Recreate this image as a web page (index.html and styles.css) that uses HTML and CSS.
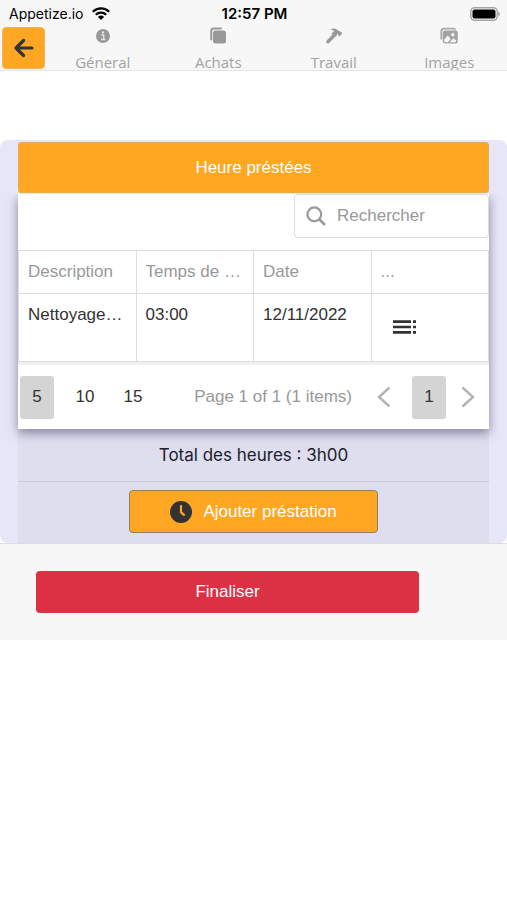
FILE: index.html
```html
<!DOCTYPE html>
<html lang="fr">
<head>
<meta charset="utf-8">
<meta name="viewport" content="width=device-width, initial-scale=1">
<title>Travail</title>
<link rel="stylesheet" href="styles.css">
</head>
<body>
<header class="top">
  <div class="status">
    <div class="status-left">
      <span>Appetize.io</span>
      <svg class="wifi" viewBox="0 0 18 13" aria-hidden="true"><g fill="none" stroke="#000" stroke-width="2.3"><path d="M.9 4.8a11.5 11.5 0 0 1 16.2 0"/><path d="M3.8 7.8a7.4 7.4 0 0 1 10.4 0"/></g><path d="M9 13 5.9 9.9a4.4 4.4 0 0 1 6.2 0z"/></svg>
    </div>
    <span class="clock">12:57 PM</span>
    <div class="status-right">
      <svg class="battery" viewBox="0 0 30 14" aria-hidden="true"><rect x=".8" y=".8" width="26.4" height="12.4" rx="3.6" fill="#f7f7f7" stroke="#a5a5a5" stroke-width="1.4"/><rect x="2.5" y="2.5" width="23" height="9" rx="2"/><path d="M28.2 4.8q1.8 1 1.8 2.2t-1.8 2.2z" fill="#a5a5a5"/></svg>
    </div>
  </div>
  <nav class="tabs">
    <button class="back" type="button" aria-label="Retour"><svg viewBox="0 0 20 20" aria-hidden="true"><path d="M18 10H2.500M9.500 2.500 2 10l7.500 7.500" fill="none" stroke="#333" stroke-width="3.200" stroke-linecap="round" stroke-linejoin="round"/></svg></button>
    <a class="tab" href="#general"><svg viewBox="0 0 18 18" aria-hidden="true"><circle cx="9" cy="9" r="7" fill="#999"/><path d="M7.300 8h2.400v4.200M7 12.500h4.300" fill="none" stroke="#e4e4e4" stroke-width="1.400"/><circle cx="9" cy="5.400" r="1.200" fill="#e4e4e4"/></svg><span>Géneral</span></a>
    <a class="tab" href="#achats"><svg viewBox="0 0 18 18" aria-hidden="true"><path d="M2.200 12.500V4a2.500 2.500 0 0 1 2.500-2.500H12" fill="none" stroke="#999" stroke-width="2" stroke-linecap="round"/><rect x="4" y="3.400" width="13" height="13" rx="2.500" fill="#999"/></svg><span>Achats</span></a>
    <a class="tab" href="#travail"><svg viewBox="0 0 18 18" aria-hidden="true"><path d="M2.900 14.800 10.500 7" stroke="#999" stroke-width="3.400" stroke-linecap="round"/><path d="M5.500 2.400Q8 .8 11 2l3.600 2.600 1-.1 1.700 1.800-2.700 2.900-1.900-1.500v-1l-1-.5-2.500 3-2.700-2.600L9.200 4Q7.500 2.600 5.500 2.400z" fill="#999"/></svg><span>Travail</span></a>
    <a class="tab" href="#images"><svg viewBox="0 0 18 18" aria-hidden="true"><path d="M1.300 12.500V4.500A3 3 0 0 1 4.300 1.600h9.200q1.500 0 2 1.200" fill="none" stroke="#aaa" stroke-width="1.800"/><rect x="2.800" y="3.600" width="15" height="12.900" rx="2.500" fill="#a3a3a3"/><circle cx="12.800" cy="7.800" r="1.800" fill="#f7f7f7"/><path d="m4.300 12.500 3.500-4 2.900 3.400-3 3.300H5.500q-1.200 0-1.200-1.200zM9.500 15.200l4-4 2.700 2.400v.5q0 1.100-1.200 1.100z" fill="#f7f7f7"/></svg><span>Images</span></a>
  </nav>
</header>
<main class="panel">
  <h1 class="title">Heure préstées</h1>
  <section class="grid">
    <div class="toolbar">
      <label class="search"><svg viewBox="0 0 20 20" aria-hidden="true"><g fill="none" stroke="#999" stroke-width="2.200"><circle cx="8.300" cy="8.300" r="6.900"/><path d="m13 13 6 6" stroke-width="2.600"/></g></svg><input type="text" placeholder="Rechercher" aria-label="Rechercher"></label>
    </div>
    <table>
      <thead><tr><th>Description</th><th>Temps de …</th><th>Date</th><th>...</th></tr></thead>
      <tbody><tr><td>Nettoyage…</td><td>03:00</td><td>12/11/2022</td><td><button class="menu" type="button" aria-label="Actions"><svg viewBox="0 0 24 14" aria-hidden="true"><path d="M0 1.600h18M0 7h18M0 12.400h18M20 1.600h3M20 7h3M20 12.400h3" stroke="#333" stroke-width="2.700"/></svg></button></td></tr></tbody>
    </table>
    <div class="pager">
      <div class="sizes"><button class="selected" type="button">5</button><button type="button">10</button><button type="button">15</button></div>
      <div class="pages">
        <span class="info">Page 1 of 1 (1 items)</span>
        <button class="arrow" type="button" aria-label="Page précédente"><svg viewBox="0 0 14 22" aria-hidden="true"><path d="M12.500 1.500 2 11l10.500 9.500" fill="none" stroke="#b3b3b3" stroke-width="2.400"/></svg></button>
        <button class="selected" type="button">1</button>
        <button class="arrow" type="button" aria-label="Page suivante"><svg viewBox="0 0 14 22" aria-hidden="true"><path d="M1.500 1.500 12 11 1.500 20.500" fill="none" stroke="#b3b3b3" stroke-width="2.400"/></svg></button>
      </div>
    </div>
  </section>
  <div class="total">Total des heures : 3h00</div>
  <div class="add-row">
    <button class="add" type="button"><svg viewBox="0 0 22 22" aria-hidden="true"><circle cx="11" cy="11" r="11" fill="#333"/><path d="M11 5v6.300l3 2.500" fill="none" stroke="#ffa722" stroke-width="2.200" stroke-linecap="round" stroke-linejoin="round"/></svg><span>Ajouter préstation</span></button>
  </div>
</main>
<footer class="footer"><button class="finish" type="button">Finaliser</button></footer>
</body>
</html>
```
FILE: styles.css
```css
* { box-sizing: border-box; }
body {
  margin: 0;
  background: #fff;
  color: #333;
  font: 17px/24px "Liberation Sans", Arial, sans-serif;
}
button {
  margin: 0;
  padding: 0;
  border: 0;
  background: none;
  color: inherit;
  font: inherit;
}
svg { display: block; flex: none; }

.top {
  height: 71px;
  overflow: hidden;
  background: #f7f7f7;
  border-bottom: 1px solid #e6e6e6;
}
.status {
  display: grid;
  grid-template-columns: 1fr auto 1fr;
  align-items: center;
  height: 27px;
  padding: 0 7px 0 9px;
  color: #000;
  font: 14px/27px Inter, sans-serif;
}
.status-left { display: flex; align-items: center; gap: 9px; }
.status-right { display: flex; justify-content: flex-end; }
.clock { font-size: 15px; font-weight: 600; }
.wifi { width: 18px; height: 13px; }
.battery { width: 30px; height: 14px; }
.tabs { display: flex; align-items: flex-start; }
.back {
  display: grid;
  place-items: center;
  flex: none;
  width: 43px;
  height: 42px;
  margin: 0 0 0 2px;
  border: 1px solid #f0b45c;
  border-radius: 4px;
  background: #ffa722;
}
.back svg { width: 20px; height: 20px; }
.tab {
  display: flex;
  flex: 1;
  flex-direction: column;
  align-items: center;
  gap: 5px;
  color: #a3a3a3;
  font: 15px/24px "Open Sans", sans-serif;
  text-decoration: none;
}
.tab svg { width: 18px; height: 18px; }

.panel {
  margin-top: 69px;
  padding: 2px 18px 0;
  border-radius: 8px;
  background: #e6e6f8;
}
.title {
  margin: 0 0 1px;
  border: 1px solid #e5ad57;
  border-radius: 3px;
  background: #ffa722;
  color: #fff;
  font-size: 17px;
  font-weight: 400;
  line-height: 49px;
  text-align: center;
}
.grid {
  position: relative;
  background: #fff;
  box-shadow: 0 4px 10px rgba(60, 55, 90, .55);
  clip-path: inset(0 -18px -16px);
}
.toolbar { display: flex; justify-content: flex-end; height: 56px; }
.search {
  display: flex;
  align-items: center;
  gap: 11px;
  width: 195px;
  height: 44px;
  padding: 0 11px;
  border: 1px solid #ddd;
  border-radius: 4px;
}
.search svg { width: 20px; height: 20px; }
.search input {
  width: 100%;
  min-width: 0;
  padding: 0;
  border: 0;
  outline: 0;
  background: none;
  color: #333;
  font: inherit;
}
.search input::placeholder { color: #999; opacity: 1; }
table {
  width: 100%;
  border-collapse: collapse;
  table-layout: fixed;
}
th, td {
  overflow: hidden;
  padding: 9px;
  border: 1px solid #ddd;
  font-weight: 400;
  text-align: left;
  text-overflow: ellipsis;
  white-space: nowrap;
  vertical-align: top;
}
th { height: 43px; color: #999; }
td { height: 68px; }
.menu { display: block; padding: 17px 12px; }
.menu svg { width: 24px; height: 14px; }
.pager {
  display: flex;
  align-items: center;
  justify-content: space-between;
  height: 67px;
  padding: 0 4px 0 2px;
  border-top: 3px solid #f0f0f0;
}
.sizes, .pages { display: flex; align-items: center; }
.sizes { gap: 14px; }
.pager button {
  min-width: 34px;
  height: 43px;
  border-radius: 3px;
}
.pager .selected { background: #d4d4d4; }
.pages { gap: 5px; }
.pages .selected { margin-left: 6px; }
.info { margin-right: 10px; color: #999; }
.pager .arrow {
  display: grid;
  place-items: center;
}
.arrow svg { width: 14px; height: 22px; }
.total, .add-row { background: #dedeef; }
.total {
  height: 53px;
  border-bottom: 1px solid #cacadb;
  color: #20202c;
  font: 17px/52px Inter, sans-serif;
  text-align: center;
}
.add-row {
  display: flex;
  justify-content: center;
  padding: 8px 0 10px;
}
.add {
  display: flex;
  align-items: center;
  justify-content: center;
  gap: 11px;
  width: 53%;
  height: 43px;
  border: 1px solid #8c8068;
  border-radius: 4px;
  background: #ffa722;
  color: #fff;
}
.add svg { width: 22px; height: 22px; }

.footer {
  padding: 27px 88px 27px 36px;
  border-top: 1px solid #ddd;
  background: #f7f7f7;
}
.finish {
  display: block;
  width: 100%;
  height: 42px;
  border-radius: 4px;
  background: #dc3045;
  color: #fff;
}
```
